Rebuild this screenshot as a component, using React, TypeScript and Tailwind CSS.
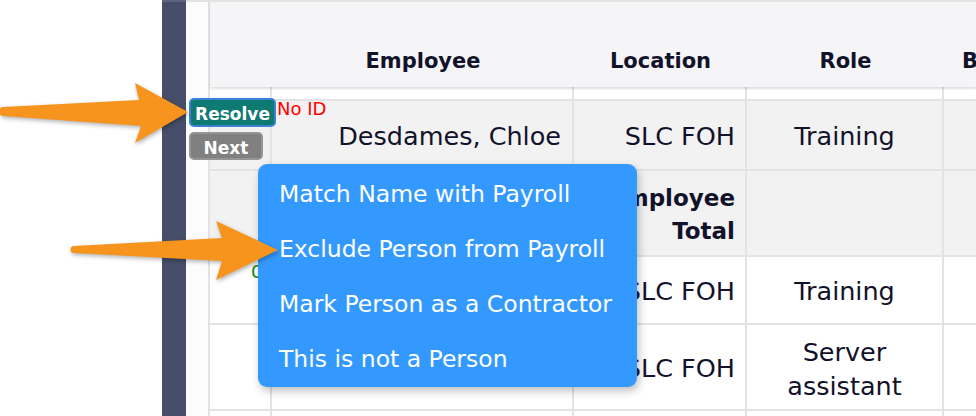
import React from "react";

const cols = "grid grid-cols-[62px_302px_173px_197px_1fr]";

function Cell({
  children,
  className = "",
}: {
  children?: React.ReactNode;
  className?: string;
}) {
  return (
    <div className={`border-r-2 border-[#e3e3e3] flex items-center ${className}`}>
      {children}
    </div>
  );
}

export default function App() {
  return (
    <div className="relative w-[976px] h-[416px] overflow-hidden bg-white flex font-['DejaVu_Sans',sans-serif] text-[#12122b]">
      <div className="w-[162px] shrink-0 bg-white" />
      <div className="w-[24px] shrink-0 bg-[#474e69] border-t-2 border-[#5d6480]" />
      <div className="flex-1 flex flex-col bg-[#fcfcfc] border-t-2 border-[#e2e2e2] pl-[22px]">
        <div className="flex-1 flex flex-col border-l-2 border-[#e3e3e3]">
          {/* header */}
          <div
            className={`${cols} h-[85px] shrink-0 bg-[#f5f5f7] shadow-[0_2px_2px_rgba(0,0,0,0.12)] relative z-10 text-[21px] font-bold leading-[28px]`}
          >
            <div />
            <div className="flex items-end justify-center pb-[12px]">Employee</div>
            <div className="flex items-end justify-center pb-[12px]">Location</div>
            <div className="flex items-end justify-center pb-[12px]">Role</div>
            <div className="flex items-end pl-[18px] pb-[12px] whitespace-nowrap overflow-hidden">Breaks</div>
          </div>
          {/* spacer */}
          <div className={`${cols} h-[14px] shrink-0 bg-white border-b-2 border-[#e3e3e3]`}>
            <Cell />
            <Cell />
            <Cell />
            <Cell />
            <div />
          </div>
          {/* row 1 */}
          <div className={`${cols} h-[70px] shrink-0 bg-[#f2f2f2] border-b-2 border-[#e3e3e3] text-[25.5px]`}>
            <Cell />
            <Cell className="justify-end pr-[11px] pt-[2px] whitespace-nowrap">Desdames, Chloe</Cell>
            <Cell className="justify-end pr-[10px] pt-[2px] whitespace-nowrap">SLC FOH</Cell>
            <Cell className="justify-center pt-[2px]">Training</Cell>
            <div />
          </div>
          {/* row 2 */}
          <div className={`${cols} h-[86px] shrink-0 bg-[#f2f2f2] border-b-2 border-[#e3e3e3] text-[23px]`}>
            <Cell />
            <Cell />
            <Cell className="justify-end pr-[10px] pt-[3px] text-right font-bold leading-[33px]">
              Employee
              <br />
              Total
            </Cell>
            <Cell />
            <div />
          </div>
          {/* row 3 */}
          <div className={`${cols} h-[68px] shrink-0 bg-white border-b-2 border-[#e3e3e3] text-[25.5px]`}>
            <Cell className="relative">
              <span className="absolute left-[41px] top-[1px] text-[18px] text-[#0a8a0a]">0</span>
            </Cell>
            <Cell />
            <Cell className="justify-end pr-[10px] pt-[2px] whitespace-nowrap">SLC FOH</Cell>
            <Cell className="justify-center pt-[2px]">Training</Cell>
            <div />
          </div>
          {/* row 4 */}
          <div className={`${cols} h-[86px] shrink-0 bg-white border-b-2 border-[#e3e3e3] text-[25.5px]`}>
            <Cell />
            <Cell />
            <Cell className="justify-end pr-[10px] pt-[2px] whitespace-nowrap">SLC FOH</Cell>
            <Cell className="justify-center text-center leading-[34px] pt-[3px]">
              Server
              <br />
              assistant
            </Cell>
            <div />
          </div>
          {/* row 5 */}
          <div className={`${cols} flex-1 bg-white`}>
            <Cell />
            <Cell />
            <Cell />
            <Cell />
            <div />
          </div>
        </div>
      </div>

      {/* Resolve / Next buttons */}
      <div className="absolute left-[189px] top-[98px] w-[87px] h-[29px] rounded-[5px] bg-[#0f7a72] border-2 border-[#3b82d6] text-white text-[17px] font-bold flex items-center justify-center pt-[3px] leading-[20px] z-20">
        Resolve
      </div>
      <div className="absolute left-[277px] top-[99px] text-[18px] leading-[20px] text-[#ff0000] z-20">
        No ID
      </div>
      <div className="absolute left-[189px] top-[132px] w-[74px] h-[28px] rounded-[5px] bg-[#808080] border-2 border-[#959595] text-white text-[17px] font-bold flex items-center justify-center pt-[3px] leading-[20px] z-20">
        Next
      </div>

      {/* dropdown menu */}
      <div className="absolute left-[258px] top-[164px] w-[379px] h-[223px] rounded-[9px] bg-[#3399ff] shadow-[2px_4px_8px_rgba(0,0,0,0.25)] text-white text-[23.5px] pl-[21px] pt-[3px] flex flex-col z-20 whitespace-nowrap">
        <div className="h-[56px] flex items-center">Match Name with Payroll</div>
        <div className="h-[56px] flex items-center">Exclude Person from Payroll</div>
        <div className="h-[56px] flex items-center">Mark Person as a Contractor</div>
        <div className="h-[56px] flex items-center">This is not a Person</div>
      </div>

      {/* arrows */}
      <svg
        className="absolute left-0 top-0 z-30 pointer-events-none drop-shadow-[1px_2px_2px_rgba(0,0,0,0.3)]"
        width="976"
        height="416"
        viewBox="0 0 976 416"
      >
        <path
          d="M 3 107 L 139 100 L 135 83 L 188 112 L 135 143 L 141 126 L 3 116 A 4.5 4.5 0 0 1 3 107 Z"
          fill="#f7941d"
        />
        <path
          d="M 74 246 L 222 238 L 216 221 L 278 250 L 216 280 L 222 261 L 74 253 A 3.5 3.5 0 0 1 74 246 Z"
          fill="#f7941d"
        />
      </svg>
    </div>
  );
}
